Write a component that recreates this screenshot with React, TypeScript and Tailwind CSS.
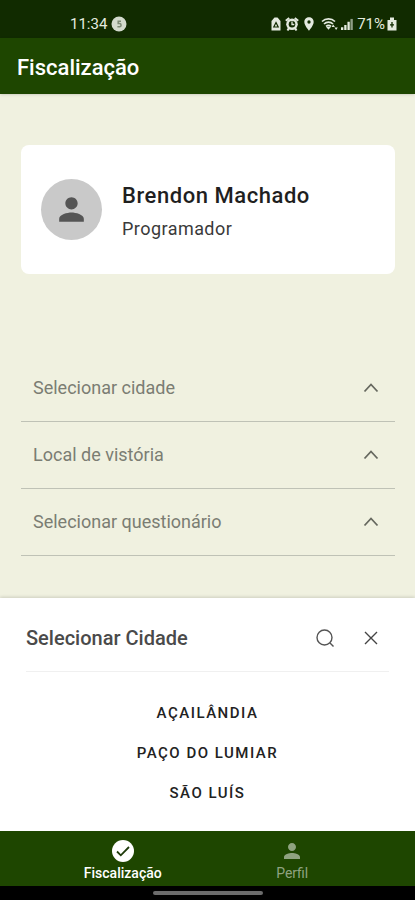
import { useState } from "react";
import { MdPerson, MdLocationOn } from "react-icons/md";

const CITIES = ["AÇAILÂNDIA", "PAÇO DO LUMIAR", "SÃO LUÍS"];

const FIELDS = [
  { id: "city", label: "Selecionar cidade", options: CITIES },
  { id: "place", label: "Local de vistória", options: [] },
  { id: "form", label: "Selecionar questionário", options: [] },
];

function StatusBar() {
  return (
    <div className="flex h-[38px] items-end justify-between bg-[#112b00] pr-[18px] pb-1 pl-[70px] text-[#e4eadf]">
      <div className="flex items-center gap-1">
        <span className="text-[15px] leading-5">11:34</span>
        <svg viewBox="0 0 16 16" className="size-4">
          <circle cx="8" cy="8" r="7.5" fill="#d3dacd" />
          <path d="M10 5.2H7.2v2.3h1.6a1.7 1.7 0 0 1 0 3.3H6.4" fill="none" stroke="#7d8a75" strokeWidth="1.5" />
        </svg>
      </div>
      <div className="flex items-center">
        <svg viewBox="0 0 10 14" className="mr-1 h-3.5 w-2.5">
          <path d="M3.500 0.500h3L9.500 4v9.500h-9V4z" fill="currentColor" />
          <path d="M5 5.500l2.200 4.500H2.800z" fill="none" stroke="#112b00" strokeWidth="1.200" />
        </svg>
        <svg viewBox="0 0 14 14" className="mr-0.5 size-3.5">
          <path d="M0.800 3.800l3.400-2.800M13.200 3.800L9.800 1M2.500 13.500l1.500-2.500M11.500 13.500L10 11" stroke="currentColor" strokeWidth="2" />
          <circle cx="7" cy="7.300" r="5.800" fill="currentColor" />
          <circle cx="7" cy="7.300" r="3.300" fill="#112b00" />
          <path d="M7 4.500v3h2.300" fill="none" stroke="currentColor" strokeWidth="1.300" />
        </svg>
        <MdLocationOn className="mr-1 size-4" />
        <svg viewBox="0 0 18 14" className="mr-0.5 h-3.5 w-[18px]">
          <path d="M1 4.500a9.500 9.500 0 0 1 13 0M3 7a6.500 6.500 0 0 1 9 0M5 9.300a4 4 0 0 1 5 0" fill="none" stroke="currentColor" strokeWidth="1.700" />
          <path d="M5 9.800h5l-2.500 3z" fill="currentColor" />
          <path d="M10.500 10l1.700-2.500L13.900 10zM13.500 10.500l1.600 2.500 1.700-2.500z" fill="currentColor" />
        </svg>
        <svg viewBox="0 0 13 13" className="mr-1 size-3" fill="currentColor">
          <path d="M0 10h2.500v3H0zM3.500 7.500H6V13H3.500zM7 4h2.500v9H7z" />
          <path d="M10.200 1h2.600v12h-2.600z" opacity="0.6" />
        </svg>
        <span className="mr-0.5 text-[15px] leading-5">71%</span>
        <svg viewBox="0 0 10 14" className="h-3.5 w-2.5">
          <path d="M3 0.500h4v2.500h2.500v10.500h-9V3H3z" fill="currentColor" />
          <path d="M5 5v5.500M3 7.800h4" stroke="#112b00" strokeWidth="1.300" />
        </svg>
      </div>
    </div>
  );
}

function ProfileCard() {
  return (
    <section className="flex items-center gap-5 rounded-lg bg-white px-5 py-[33px]">
      <div className="flex size-[61px] items-center justify-center rounded-full bg-[#c9c9c9]">
        <MdPerson className="size-[37px] text-[#555]" />
      </div>
      <div>
        <h2 className="text-[22px] leading-9 font-medium tracking-wide text-[#1f1f1f]">Brendon Machado</h2>
        <p className="mt-[3px] text-lg leading-6 tracking-wide text-[#3a3a3a]">Programador</p>
      </div>
    </section>
  );
}

export default function App() {
  const [values, setValues] = useState<Record<string, string>>({});
  const [sheetOpen, setSheetOpen] = useState(true);

  function choose(id: string, value: string) {
    setValues((prev) => ({ ...prev, [id]: value }));
  }

  return (
    <div className="flex min-h-screen flex-col bg-[#f0f1e0] font-[Roboto,sans-serif]">
      <StatusBar />
      <header className="flex h-14 items-center bg-[#1e4600] px-[17px] pt-1 shadow-sm">
        <h1 className="text-[22px] leading-7 font-medium text-white">Fiscalização</h1>
      </header>

      <main className="flex-1 pt-[51px] pr-5 pb-[42px] pl-[21px]">
        <ProfileCard />
        <form className="mt-[81px]">
          {FIELDS.map((field) => (
            <div key={field.id} className="flex h-[67px] items-center border-b border-[#bfc2b6] px-3">
              <select
                id={field.id}
                aria-label={field.label}
                value={values[field.id] ?? ""}
                onChange={(e) => choose(field.id, e.target.value)}
                className="h-full min-w-0 flex-1 appearance-none bg-transparent text-lg leading-8 text-[#7b7d73] outline-none"
              >
                <option value="">{field.label}</option>
                {field.options.map((option) => (
                  <option key={option}>{option}</option>
                ))}
              </select>
              <svg viewBox="0 0 24 24" className="size-6 text-[#66685f]">
                <path d="M5.500 15.500l6.500-7 6.500 7" fill="none" stroke="currentColor" strokeWidth="1.800" />
              </svg>
            </div>
          ))}
        </form>
      </main>

      {sheetOpen && (
        <section className="bg-white px-[26px] pb-[18px] shadow-[0_-1px_3px_rgba(0,0,0,0.15)]">
          <div className="flex h-[74px] items-center border-b border-[#f0f0f0] pt-1.5 pr-2">
            <h2 className="flex-1 text-xl leading-7 font-medium text-[#4a4a4a]">Selecionar Cidade</h2>
            <button type="button" aria-label="Buscar" className="mr-[26px] text-[#555]">
              <svg viewBox="0 0 20 20" className="size-5" fill="none" stroke="currentColor" strokeWidth="1.400">
                <circle cx="9.500" cy="9.500" r="7.500" />
                <path d="M15 15l3.500 3.500" />
              </svg>
            </button>
            <button type="button" aria-label="Fechar" onClick={() => setSheetOpen(false)} className="text-[#444]">
              <svg viewBox="0 0 20 20" className="size-5" fill="none" stroke="currentColor" strokeWidth="1.400">
                <path d="M4 4l12 12M16 4L4 16" />
              </svg>
            </button>
          </div>
          <ul className="pt-[21px]">
            {CITIES.map((city) => (
              <li key={city}>
                <button
                  type="button"
                  onClick={() => choose("city", city)}
                  className="h-10 w-full text-[15px] font-medium tracking-widest text-[#222]"
                >
                  {city}
                </button>
              </li>
            ))}
          </ul>
        </section>
      )}

      <nav className="grid h-[55px] grid-cols-2 bg-[#1e4600] px-[38px]">
        <a href="#fiscalizacao" aria-current="page" className="flex flex-col items-center pt-2 text-white">
          <svg viewBox="0 0 24 24" className="size-6">
            <circle cx="12" cy="12" r="11" fill="currentColor" />
            <path d="M6 12.500l3.800 3.800L18 8" fill="none" stroke="#1e3a0a" strokeWidth="1.800" />
          </svg>
          <span className="text-sm leading-5 font-medium">Fiscalização</span>
        </a>
        <a href="#perfil" className="flex flex-col items-center pt-2 text-[#8fa380]">
          <MdPerson className="size-6" />
          <span className="text-sm leading-5">Perfil</span>
        </a>
      </nav>
      <div className="flex h-3.5 items-center justify-center bg-black">
        <div className="h-1 w-[110px] rounded-full bg-[#6b6b6b]" />
      </div>
    </div>
  );
}
